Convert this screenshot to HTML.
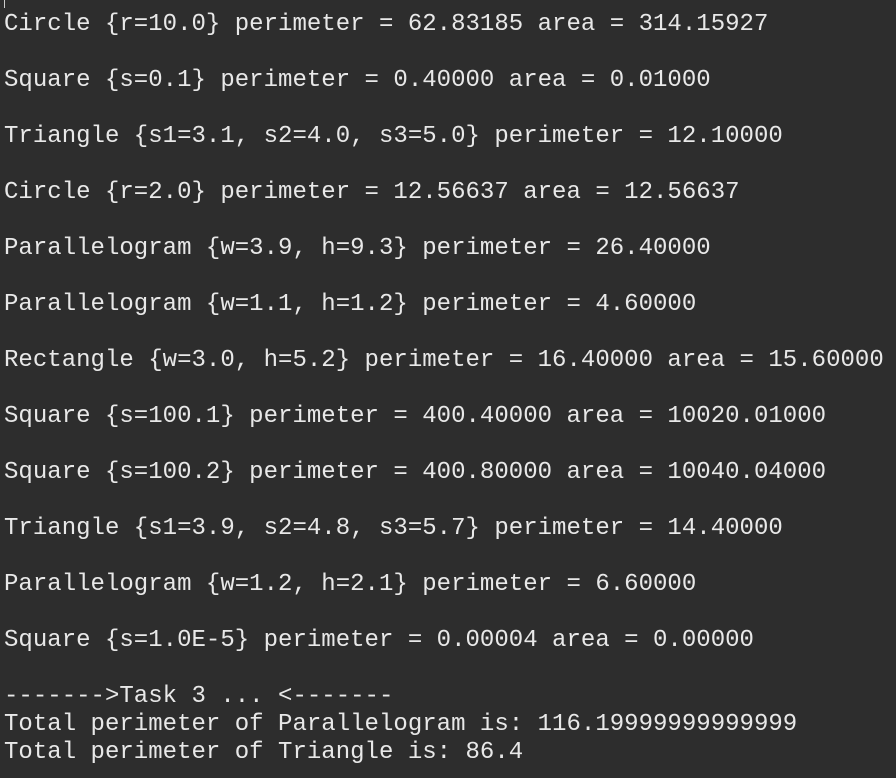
<!DOCTYPE html>
<html><head><style>
html,body{margin:0;padding:0;background:#2d2d2d;width:896px;height:778px;overflow:hidden}
pre{margin:0;position:absolute;left:4px;top:11px;font-family:"Liberation Mono",monospace;font-size:24px;line-height:28px;color:#e8e8e8;letter-spacing:0.02px}
.cur{position:absolute;left:4px;top:0;width:1px;height:8px;background:#ccc}
</style></head><body><div class="cur"></div><pre>Circle {r=10.0} perimeter = 62.83185 area = 314.15927

Square {s=0.1} perimeter = 0.40000 area = 0.01000

Triangle {s1=3.1, s2=4.0, s3=5.0} perimeter = 12.10000

Circle {r=2.0} perimeter = 12.56637 area = 12.56637

Parallelogram {w=3.9, h=9.3} perimeter = 26.40000

Parallelogram {w=1.1, h=1.2} perimeter = 4.60000

Rectangle {w=3.0, h=5.2} perimeter = 16.40000 area = 15.60000

Square {s=100.1} perimeter = 400.40000 area = 10020.01000

Square {s=100.2} perimeter = 400.80000 area = 10040.04000

Triangle {s1=3.9, s2=4.8, s3=5.7} perimeter = 14.40000

Parallelogram {w=1.2, h=2.1} perimeter = 6.60000

Square {s=1.0E-5} perimeter = 0.00004 area = 0.00000

-------&gt;Task 3 ... &lt;-------
Total perimeter of Parallelogram is: 116.19999999999999
Total perimeter of Triangle is: 86.4</pre></body></html>
